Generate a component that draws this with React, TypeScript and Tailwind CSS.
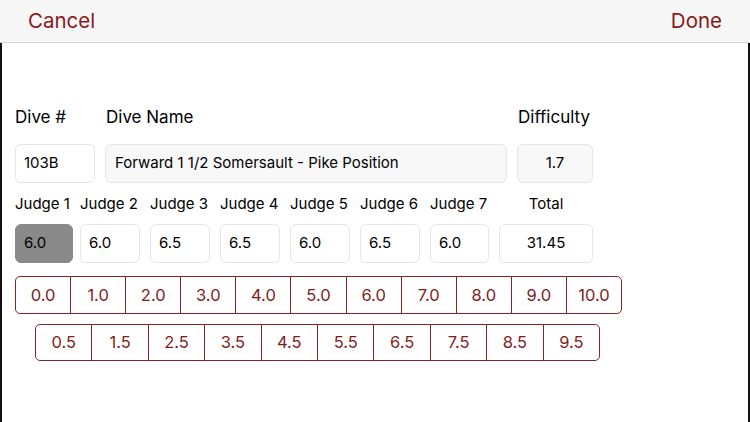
import React from "react";

const judges = ["6.0", "6.0", "6.5", "6.5", "6.0", "6.5", "6.0"];
const row1 = ["0.0", "1.0", "2.0", "3.0", "4.0", "5.0", "6.0", "7.0", "8.0", "9.0", "10.0"];
const row2 = ["0.5", "1.5", "2.5", "3.5", "4.5", "5.5", "6.5", "7.5", "8.5", "9.5"];

function Segments({ items, width, cls }: { items: string[]; width: number; cls: string }) {
  return (
    <div
      className={`flex border-[1.5px] border-[#872424] rounded-[5px] overflow-hidden ${cls}`}
      style={{ width }}
    >
      {items.map((v, i) => (
        <div
          key={v}
          className={`flex-1 flex items-center justify-center text-[16.5px] text-[#7f1d1d] ${
            i > 0 ? "border-l-[1.5px] border-[#872424]" : ""
          }`}
        >
          {v}
        </div>
      ))}
    </div>
  );
}

export default function App() {
  return (
    <div
      className="w-[750px] h-[422px] overflow-hidden bg-white text-black flex flex-col"
      style={{ fontFamily: "Inter, 'Noto Sans', sans-serif" }}
    >
      <div className="h-[43px] shrink-0 bg-[#f7f7f7] border-b border-[#d4d4d4] flex items-center justify-between pl-[28px] pr-[28px] text-[20.5px] text-[#8a1a1a]">
        <span>Cancel</span>
        <span>Done</span>
      </div>
      <div className="flex-1 border-l-[2px] border-r-[2px] border-[#111111] pl-[13px]">
        <div className="flex mt-[63px] h-[24px] items-center text-[17px]">
          <div className="w-[91px]">Dive #</div>
          <div className="w-[412px]">Dive Name</div>
          <div>Difficulty</div>
        </div>
        <div className="flex gap-[10px] mt-[14px] h-[39px] text-[15px]">
          <div className="w-[80px] rounded-[6px] border border-[#e5e5e5] bg-white flex items-center pl-[8px]">103B</div>
          <div className="w-[402px] rounded-[6px] border border-[#e5e5e5] bg-[#f8f8f8] flex items-center pl-[9px]">
            Forward 1 1/2 Somersault - Pike Position
          </div>
          <div className="w-[76px] rounded-[6px] border border-[#e5e5e5] bg-[#f8f8f8] flex items-center justify-center">1.7</div>
        </div>
        <div className="flex mt-[11px] h-[20px] items-center text-[15px]">
          {judges.map((_, i) => (
            <div key={i} className={i === 0 ? "w-[65px]" : "w-[70px]"}>
              Judge {i + 1}
            </div>
          ))}
          <div className="w-[94px] ml-[-1px] text-center">Total</div>
        </div>
        <div className="flex mt-[10px] h-[39px] text-[15px]">
          {judges.map((v, i) => (
            <div
              key={i}
              className={`h-full rounded-[6px] border flex items-center pl-[8px] ${
                i === 0
                  ? "w-[58px] mr-[7px] bg-[#8a8a8a] border-[#8a8a8a]"
                  : i === 6
                  ? "w-[59px] mr-[10px] bg-white border-[#e5e5e5]"
                  : "w-[60px] mr-[10px] bg-white border-[#e5e5e5]"
              }`}
            >
              {v}
            </div>
          ))}
          <div className="w-[94px] h-full rounded-[6px] border border-[#e5e5e5] flex items-center justify-center">31.45</div>
        </div>
        <Segments items={row1} width={607} cls="mt-[13px] h-[38px]" />
        <Segments items={row2} width={565} cls="mt-[10px] h-[37px] ml-[20px]" />
      </div>
    </div>
  );
}
